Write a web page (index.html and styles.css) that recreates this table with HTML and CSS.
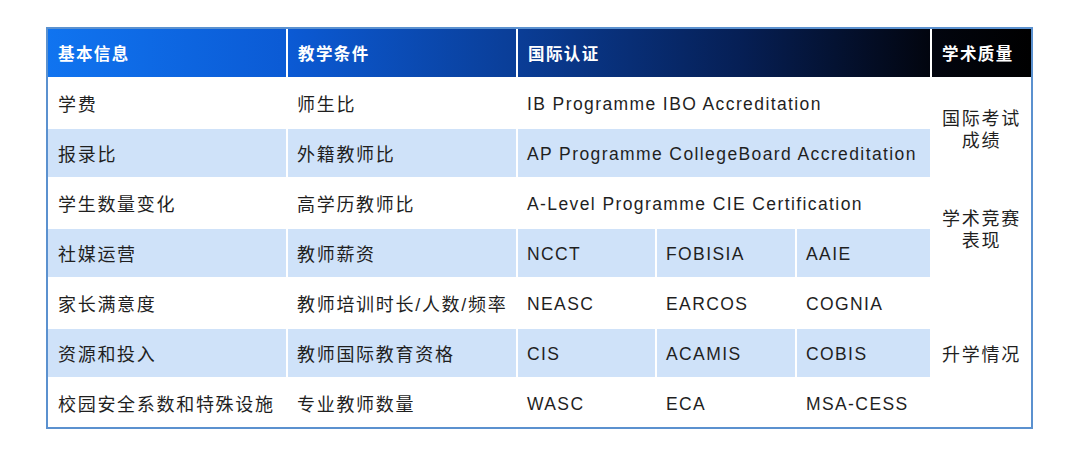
FILE: index.html
```html
<!DOCTYPE html>
<html lang="zh-CN">
<head>
<meta charset="utf-8">
<title>学校评估维度</title>
<link rel="stylesheet" href="styles.css">
</head>
<body>
<div class="frame">
  <div class="grid">
    <div class="th">基本信息</div>
    <div class="th">教学条件</div>
    <div class="th span3">国际认证</div>
    <div class="th">学术质量</div>

    <div class="cell first zh">学费</div>
    <div class="cell zh">师生比</div>
    <div class="cell en span3">IB Programme IBO Accreditation</div>
    <div class="side zh rows2">国际考试<br>成绩</div>

    <div class="cell first zh alt">报录比</div>
    <div class="cell zh alt">外籍教师比</div>
    <div class="cell en alt span3">AP Programme CollegeBoard Accreditation</div>

    <div class="cell first zh">学生数量变化</div>
    <div class="cell zh">高学历教师比</div>
    <div class="cell en span3">A-Level Programme CIE Certification</div>
    <div class="side zh rows2">学术竞赛<br>表现</div>

    <div class="cell first zh alt">社媒运营</div>
    <div class="cell zh alt">教师薪资</div>
    <div class="cell en alt">NCCT</div>
    <div class="cell en alt">FOBISIA</div>
    <div class="cell en alt">AAIE</div>

    <div class="cell first zh">家长满意度</div>
    <div class="cell zh">教师培训时长/人数/频率</div>
    <div class="cell en">NEASC</div>
    <div class="cell en">EARCOS</div>
    <div class="cell en">COGNIA</div>
    <div class="side zh rows3">升学情况</div>

    <div class="cell first zh alt">资源和投入</div>
    <div class="cell zh alt">教师国际教育资格</div>
    <div class="cell en alt">CIS</div>
    <div class="cell en alt">ACAMIS</div>
    <div class="cell en alt">COBIS</div>

    <div class="cell first zh">校园安全系数和特殊设施</div>
    <div class="cell zh">专业教师数量</div>
    <div class="cell en">WASC</div>
    <div class="cell en">ECA</div>
    <div class="cell en">MSA-CESS</div>
  </div>
</div>
</body>
</html>
```
FILE: styles.css
```css
html, body {
  margin: 0;
  padding: 0;
  background: #ffffff;
}

body {
  font-family: "Liberation Sans", "Noto Sans CJK SC", sans-serif;
  color: #1f1f1f;
}

.frame {
  margin: 27px 0 0 46px;
  width: fit-content;
  border: 2px solid #5b91cf;
}

.grid {
  display: grid;
  grid-template-columns: 238px 228px 137px 138px 133px 99px;
  grid-auto-rows: 48px;
  gap: 2px;
  background: #ffffff;
}

.th {
  display: flex;
  align-items: center;
  padding: 0 10px;
  color: #ffffff;
  font-family: "Noto Sans CJK SC", sans-serif;
  font-weight: 700;
  font-size: 16.5px;
  letter-spacing: 1.4px;
  background-image: linear-gradient(90deg,
    #1074f0 47px,
    #0b5ad4 290px,
    #0a3d96 520px,
    #061f55 740px,
    #02050f 930px,
    #000000 1032px);
  background-attachment: fixed;
}

.span3 {
  grid-column: span 3;
}

.cell {
  display: flex;
  align-items: center;
  padding: 0 9px;
  background: #ffffff;
  white-space: nowrap;
}

.first {
  padding-left: 10px;
}

.alt {
  background: #cfe2f9;
}

.zh {
  font-size: 18px;
  letter-spacing: 1.7px;
}

.en {
  font-size: 17.5px;
  letter-spacing: 1.4px;
  padding-top: 3px;
}

.side {
  display: flex;
  align-items: center;
  justify-content: center;
  text-align: center;
  line-height: 22px;
  padding-top: 3px;
  background: #ffffff;
}

.rows2 {
  grid-row: span 2;
}

.rows3 {
  grid-row: span 3;
}
```
